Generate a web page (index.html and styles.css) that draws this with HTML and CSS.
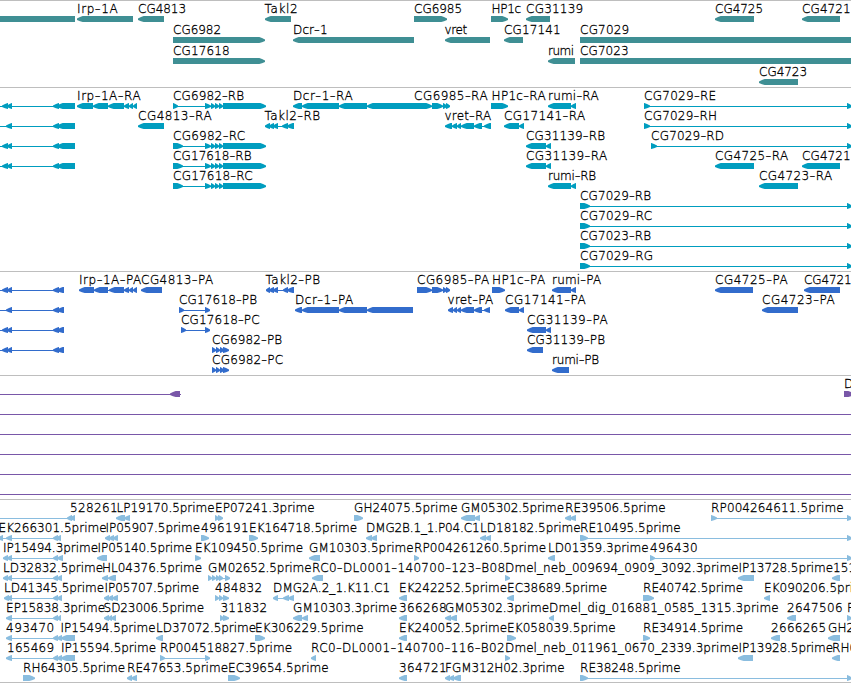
FILE: index.html
```
<!DOCTYPE html>
<html lang="en">
<head>
    <meta charset="UTF-8">
    <meta name="viewport" content="width=device-width, initial-scale=1.0">
    <title>Genome Browser Tracks</title>
    <link rel="stylesheet" href="styles.css">
</head>
<body>
    <main id="browser">
        <section class="track genes" id="genes"></section>
        <section class="track transcripts" id="transcripts"></section>
        <section class="track proteins" id="proteins"></section>
        <section class="track deletions" id="deletions"></section>
        <section class="track ests" id="ests"></section>
    </main>
    <script src="tracks.js"></script>
</body>
</html>
```
FILE: styles.css
```
* {
    margin: 0;
    padding: 0;
    box-sizing: border-box;
}

body {
    background-color: #fff;
    overflow: hidden;
}

#browser {
    width: 851px;
    border-bottom: 1px solid #bebebe;
}

.track {
    border-top: 1px solid #bebebe;
    padding-bottom: 3px;
}

.row {
    display: block;
    width: 851px;
    height: 20px;
    overflow: visible;
}

.row text {
    font-family: "DejaVu Sans Light", "DejaVu Sans", sans-serif;
    font-size: 12px;
    fill: #000;
    stroke: #000;
    stroke-width: 0.3px;
}

.row .dash {
    font-size: 16px;
}

.intron {
    shape-rendering: crispEdges;
}

.genes {
    fill: #3f8f94;
    padding-bottom: 2px;
}

.genes .row {
    height: 21px;
}

.transcripts {
    fill: #009dbf;
}

.proteins {
    fill: #326ccc;
}

.deletions {
    fill: #7957a8;
}

.ests {
    fill: #8abddf;
    padding-bottom: 2px;
}
```
FILE: tracks.js
```
// feature: [label, label start, label end, strand, exons]
// strand is '<', '>' or '=' (runs off the view, no arrow head)
const tracks = {
    genes: [
        [
            ['', 0, 0, '=', '0-75'],
            ['Irp-1A', 77.5, 117, '<', '77-133'],
            ['CG4813', 138.5, 185.5, '<', '138-164'],
            ['Takl2', 265, 297, '<', '265-291'],
            ['CG6985', 414.5, 461.5, '>', '414-447'],
            ['HP1c', 492, 520.5, '>', '491-508'],
            ['CG31139', 526.5, 582.5, '<', '526-550'],
            ['CG4725', 715.5, 762.5, '<', '715-754'],
            ['CG4721', 802.5, 850, '<', '802-840']
        ],
        [
            ['CG6982', 173.5, 220.5, '>', '173-265'],
            ['Dcr-1', 293.5, 327, '<', '293-414'],
            ['vret', 445, 466.5, '<', '445-490'],
            ['CG17141', 504.5, 560, '<', '504-523'],
            ['CG7029', 580.5, 628.5, '=', '580-851']
        ],
        [
            ['CG17618', 173.5, 229, '>', '173-265'],
            ['rumi', 548.5, 573.5, '<', '548-575'],
            ['CG7023', 580.5, 628, '=', '580-851']
        ],
        [
            ['CG4723', 759.5, 806.5, '<', '759-798']
        ]
    ],
    transcripts: [
        [
            ['', 0, 0, '<', '0-0 2-8 7-12 53-59 57-75'],
            ['Irp-1A-RA', 77.5, 140, '<', '77-93 93-108 108-124 124-129 129-133 133-137'],
            ['CG6982-RB', 173.5, 243.5, '>', '173-178 205-211 211-215 215-219 219-223 223-266'],
            ['Dcr-1-RA', 293.5, 352, '<', '293-302 302-339 339-367 367-414'],
            ['CG6985-RA', 414.5, 487, '>', '414-432 432-443 443-447 446-450'],
            ['HP1c-RA', 492, 545, '>', '491-508'],
            ['rumi-RA', 548.5, 598, '<', '548-571 571-576'],
            ['CG7029-RE', 644.5, 715.5, '>', '644-650 847-852']
        ],
        [
            ['', 0, 0, '<', '0-0 6-12 53-59 57-75'],
            ['CG4813-RA', 138.5, 211, '<', '138-164'],
            ['Takl2-RB', 265, 319.5, '<', '265-270 269-274 273-278 282-288 287-294'],
            ['vret-RA', 445, 490.5, '<', '445-452 452-457 457-461 461-474 474-482 484-491'],
            ['CG17141-RA', 504.5, 584.5, '<', '504-519 519-524'],
            ['CG7029-RH', 644.5, 716.5, '>', '644-650 847-852']
        ],
        [
            ['', 0, 0, '<', '0-0 2-8 7-12 53-59 57-75'],
            ['CG6982-RC', 173.5, 244.5, '>', '173-183 205-211 211-215 215-219 219-223 223-266'],
            ['CG31139-RB', 526.5, 604.5, '<', '526-546 546-551'],
            ['CG7029-RD', 651.5, 723.5, '>', '651-657 847-852']
        ],
        [
            ['', 0, 0, '<', '0-0 2-8 7-12 53-59 57-75'],
            ['CG17618-RB', 173.5, 251, '>', '173-183 205-211 211-215 215-219 219-223 223-266'],
            ['CG31139-RA', 526.5, 606.5, '<', '526-546 546-551'],
            ['CG4725-RA', 715.5, 787.5, '<', '715-754'],
            ['CG4721', 802.5, 850, '<', '802-840']
        ],
        [
            ['CG17618-RC', 173.5, 252, '>', '173-183 205-211 211-215 215-219 219-223 223-266'],
            ['rumi-RB', 548.5, 595.5, '<', '548-571 571-576'],
            ['CG4723-RA', 759.5, 831.5, '<', '759-798']
        ],
        [['CG7029-RB', 580.5, 650.5, '>', '580-590 847-852']],
        [['CG7029-RC', 580.5, 651.5, '>', '580-590 847-852']],
        [['CG7023-RB', 580.5, 650.5, '>', '580-590 847-852']],
        [['CG7029-RG', 580.5, 652.5, '>', '580-590 847-852']]
    ],
    proteins: [
        [
            ['', 0, 0, '<', '0-0 2-8 7-12 53-59 57-64'],
            ['Irp-1A-PA', 79.5, 140.5, '<', '79-94 94-108 109-124 124-129 129-133 133-137'],
            ['CG4813-PA', 141.5, 212.5, '<', '141-162'],
            ['Takl2-PB', 266, 319.5, '<', '266-270 269-274 273-278 283-288 287-294'],
            ['CG6985-PA', 417.5, 488.5, '>', '417-432 432-443 443-447 446-450'],
            ['HP1c-PA', 492.5, 544.5, '>', '492-505'],
            ['rumi-PA', 552.5, 600.5, '<', '552-571 571-576'],
            ['CG4725-PA', 715.5, 787, '<', '715-753'],
            ['CG4721', 804.5, 851, '<', '804-840']
        ],
        [
            ['', 0, 0, '<', '0-0 6-12 53-59 57-64'],
            ['CG17618-PB', 179.5, 256.5, '>', '179-184 205-210'],
            ['Dcr-1-PA', 295.5, 352.5, '<', '295-302 302-339 339-367 367-413'],
            ['vret-PA', 448, 492.5, '<', '448-453 453-457 457-461 461-474 474-482 484-490'],
            ['CG17141-PA', 505.5, 585, '<', '505-519 519-524'],
            ['CG4723-PA', 762.5, 834, '<', '762-798']
        ],
        [
            ['', 0, 0, '<', '0-0 2-8 7-12 53-59 57-64'],
            ['CG17618-PC', 181.5, 259, '>', '181-186 205-210'],
            ['CG31139-PA', 527.5, 607, '<', '527-546 546-551']
        ],
        [
            ['', 0, 0, '<', '0-0 2-8 7-12 53-59 57-64'],
            ['CG6982-PB', 212.5, 281.5, '>', '212-216 216-220 220-224 223-229'],
            ['CG31139-PB', 527.5, 604.5, '<', '527-543']
        ],
        [
            ['CG6982-PC', 212.5, 282.5, '>', '212-216 216-220 220-224 223-229'],
            ['rumi-PB', 552.5, 598.5, '<', '552-569']
        ]
    ],
    deletions: [
        [
            ['', 0, 0, '<', '0-0 170-180 181-181'],
            ['D', 844.4, 0, '>', '844-854']
        ],
        [['', 0, 0, '<', '0-0 851-851']],
        [['', 0, 0, '<', '0-0 851-851']],
        [['', 0, 0, '<', '0-0 851-851']],
        [['', 0, 0, '<', '0-0 851-851']],
        [['', 0, 0, '<', '0-0 851-851']]
    ],
    ests: [
        [
            ['528261', 70.5, 117, '<', '0-0 67-72 70-75'],
            ['LP19170.5prime', 117, 214, '<', '116-125 124-130'],
            ['EP07241.3prime', 215.5, 314, '>', '215-219 218-223'],
            ['GH24075.5prime', 354.5, 457, '>', '354-363'],
            ['GM05302.5prime', 461.5, 563.5, '<', '461-475 474-480'],
            ['RE39506.5prime', 565.5, 665, '<', '565-571 570-576'],
            ['RP004264611.5prime', 711.5, 843, '>', '711-717 847-852']
        ],
        [
            ['EK266301.5prime', -1, 106, '<', '-2-3 6-12 53-58 56-61'],
            ['IP05907.5prime', 106, 199.5, '<', '105-110 109-114 113-118'],
            ['496191', 201.5, 248, '>', '201-209'],
            ['EK164718.5prime', 249.5, 356.5, '>', '249-258'],
            ['DMG2B.1_1.P04.C1', 366.5, 479, '<', '366-372 371-377'],
            ['LD18182.5prime', 480.5, 580, '<', '480-486 485-491'],
            ['RE10495.5prime', 580.5, 680, '>', '580-588 847-852']
        ],
        [
            ['IP15494.3prime', 3.5, 97.5, '<', '3-8 7-12 53-58 57-63'],
            ['IP05140.5prime', 98, 191.5, '<', '97-107'],
            ['EK109450.5prime', 195.5, 302.5, '>', '195-201'],
            ['GM10303.5prime', 309.5, 413, '<', '309-320'],
            ['RP004261260.5prime', 414.5, 545.5, '>', '414-419'],
            ['LD01359.3prime', 548.5, 648, '<', '548-555'],
            ['496430', 650.5, 697, '>', '650-655 847-852']
        ],
        [
            ['LD32832.5prime', 3.5, 102.5, '<', '3-8 7-12 53-58 57-62'],
            ['HL04376.5prime', 102.5, 201.5, '<', '102-108 108-116'],
            ['GM02652.5prime', 208.5, 311, '>', '208-212 212-216 216-220 219-223 225-230'],
            ['RC0-DL0001-140700-123-B08', 312.5, 504.5, '<', '312-323'],
            ['Dmel_neb_009694_0909_3092.3prime', 505.5, 738, '>', '505-510'],
            ['IP13728.5prime', 739, 832.5, '<', '738-754'],
            ['151', 833.5, 0, '<', '832-840']
        ],
        [
            ['LD41345.5prime', 4.5, 103.5, '<', '4-9 7-12 53-58 57-62'],
            ['IP05707.5prime', 105, 198.5, '<', '104-109 108-113 112-118'],
            ['484832', 215.5, 261.5, '>', '215-219 219-223 223-229'],
            ['DMG2A.2_1.K11.C1', 273.5, 389.5, '<', '273-278 283-289 288-294'],
            ['EK242252.5prime', 399.5, 506.5, '<', '399-407'],
            ['EC38689.5prime', 507.5, 606.5, '<', '507-514'],
            ['RE40742.5prime', 643.5, 742.5, '>', '643-654'],
            ['EK090206.5prime', 764.5, 871.5, '<', '764-770']
        ],
        [
            ['EP15838.3prime', 6.5, 104.5, '<', '6-12 53-58 57-61'],
            ['SD23006.5prime', 104, 203.5, '<', '104-109 108-112 111-116'],
            ['311832', 221, 266.5, '>', '220-224 223-229'],
            ['GM10303.3prime', 293.5, 396.5, '<', '293-302 302-308'],
            ['366268', 399.5, 446, '<', '399-407'],
            ['GM05302.3prime', 445.5, 548.5, '<', '445-451 450-457'],
            ['Dmel_dig_016881_0585_1315.3prime', 549.5, 778, '<', '549-554'],
            ['2647506', 787.5, 842, '<', '787-796'],
            ['R', 847.5, 0, '>', '847-852']
        ],
        [
            ['493470', 6.5, 53.5, '<', '6-12 53-58 57-62'],
            ['IP15494.5prime', 61, 155, '<', '61-75'],
            ['LD37072.5prime', 156.5, 255.5, '<', '156-163'],
            ['EK306229.5prime', 255.5, 363, '>', '255-265'],
            ['EK240052.5prime', 399.5, 506.5, '<', '399-407'],
            ['EK058039.5prime', 507.5, 615, '>', '507-516'],
            ['RE34914.5prime', 643.5, 742.5, '>', '643-650'],
            ['2666265', 771.5, 825.5, '<', '771-780'],
            ['GH2', 828.5, 0, '<', '828-840']
        ],
        [
            ['165469', 7.5, 53.5, '<', '6-12 53-58 57-62'],
            ['IP15594.5prime', 61.5, 155.5, '<', '61-75'],
            ['RP004518827.5prime', 160.5, 291.5, '>', '160-165 205-210'],
            ['RC0-DL0001-140700-116-B02', 311.5, 504, '<', '311-316'],
            ['Dmel_neb_011961_0670_2339.3prime', 505.5, 738, '>', '505-510'],
            ['IP13928.5prime', 739, 832.5, '<', '738-753'],
            ['RH0', 832.5, 0, '<', '832-840']
        ],
        [
            ['RH64305.5prime', 23.5, 124.5, '>', '23-35'],
            ['RE47653.5prime', 127.5, 227.5, '<', '127-132 131-137'],
            ['EC39654.5prime', 228.5, 328, '>', '228-240'],
            ['364721', 399.5, 446, '<', '399-407'],
            ['FGM312H02.3prime', 445.5, 564, '<', '445-450 449-454 453-461'],
            ['RE38248.5prime', 580.5, 680, '>', '580-588 847-852']
        ]
    ]
};

function exonShape(a, b, strand) {
    if (strand === '=') {
        return `<rect x="${a}" y="15" width="${b - a}" height="6"/>`;
    }
    const head = Math.min(b - a, 6);
    const dir = strand === '<' ? 1 : -1;
    const tip = strand === '<' ? a : b;
    const tail = strand === '<' ? b : a;
    const mid = tip + dir * head * 0.5;
    const neck = tip + dir * head * 0.95;
    return `<polygon points="${tip},17.5 ${mid},16 ${neck},15 ${tail},15 ${tail},21 ${neck},21 ${mid},20.3 ${tip},19"/>`;
}

// the dash is set larger than the letters, so shift it down and back up
function labelMarkup(label) {
    return label.split('-')
        .map((part, i) => i ? `<tspan class="dash" dy="0.8">-</tspan><tspan dy="-0.8">${part}</tspan>` : part)
        .join('');
}

function drawFeature([label, start, end, strand, exons]) {
    const spans = exons.split(' ').map(s => s.match(/^(-?\d+)-(\d+)$/).slice(1).map(Number));
    let svg = '';
    if (spans.length > 1) {
        const from = spans[0][0];
        const to = spans[spans.length - 1][1];
        svg += `<rect class="intron" x="${from}" y="18" width="${to - from}" height="1"/>`;
    }
    spans.filter(([a, b]) => b > a).forEach(([a, b]) => {
        svg += exonShape(a, b, strand);
    });
    if (label) {
        const fit = end ? ` textLength="${end - start + 1}"` : '';
        svg += `<text x="${start - 0.4}" y="12"${fit}>${labelMarkup(label)}</text>`;
    }
    return svg;
}

Object.keys(tracks).forEach(id => {
    document.getElementById(id).innerHTML = tracks[id]
        .map(row => `<svg class="row">${row.map(drawFeature).join('')}</svg>`)
        .join('');
});
```
